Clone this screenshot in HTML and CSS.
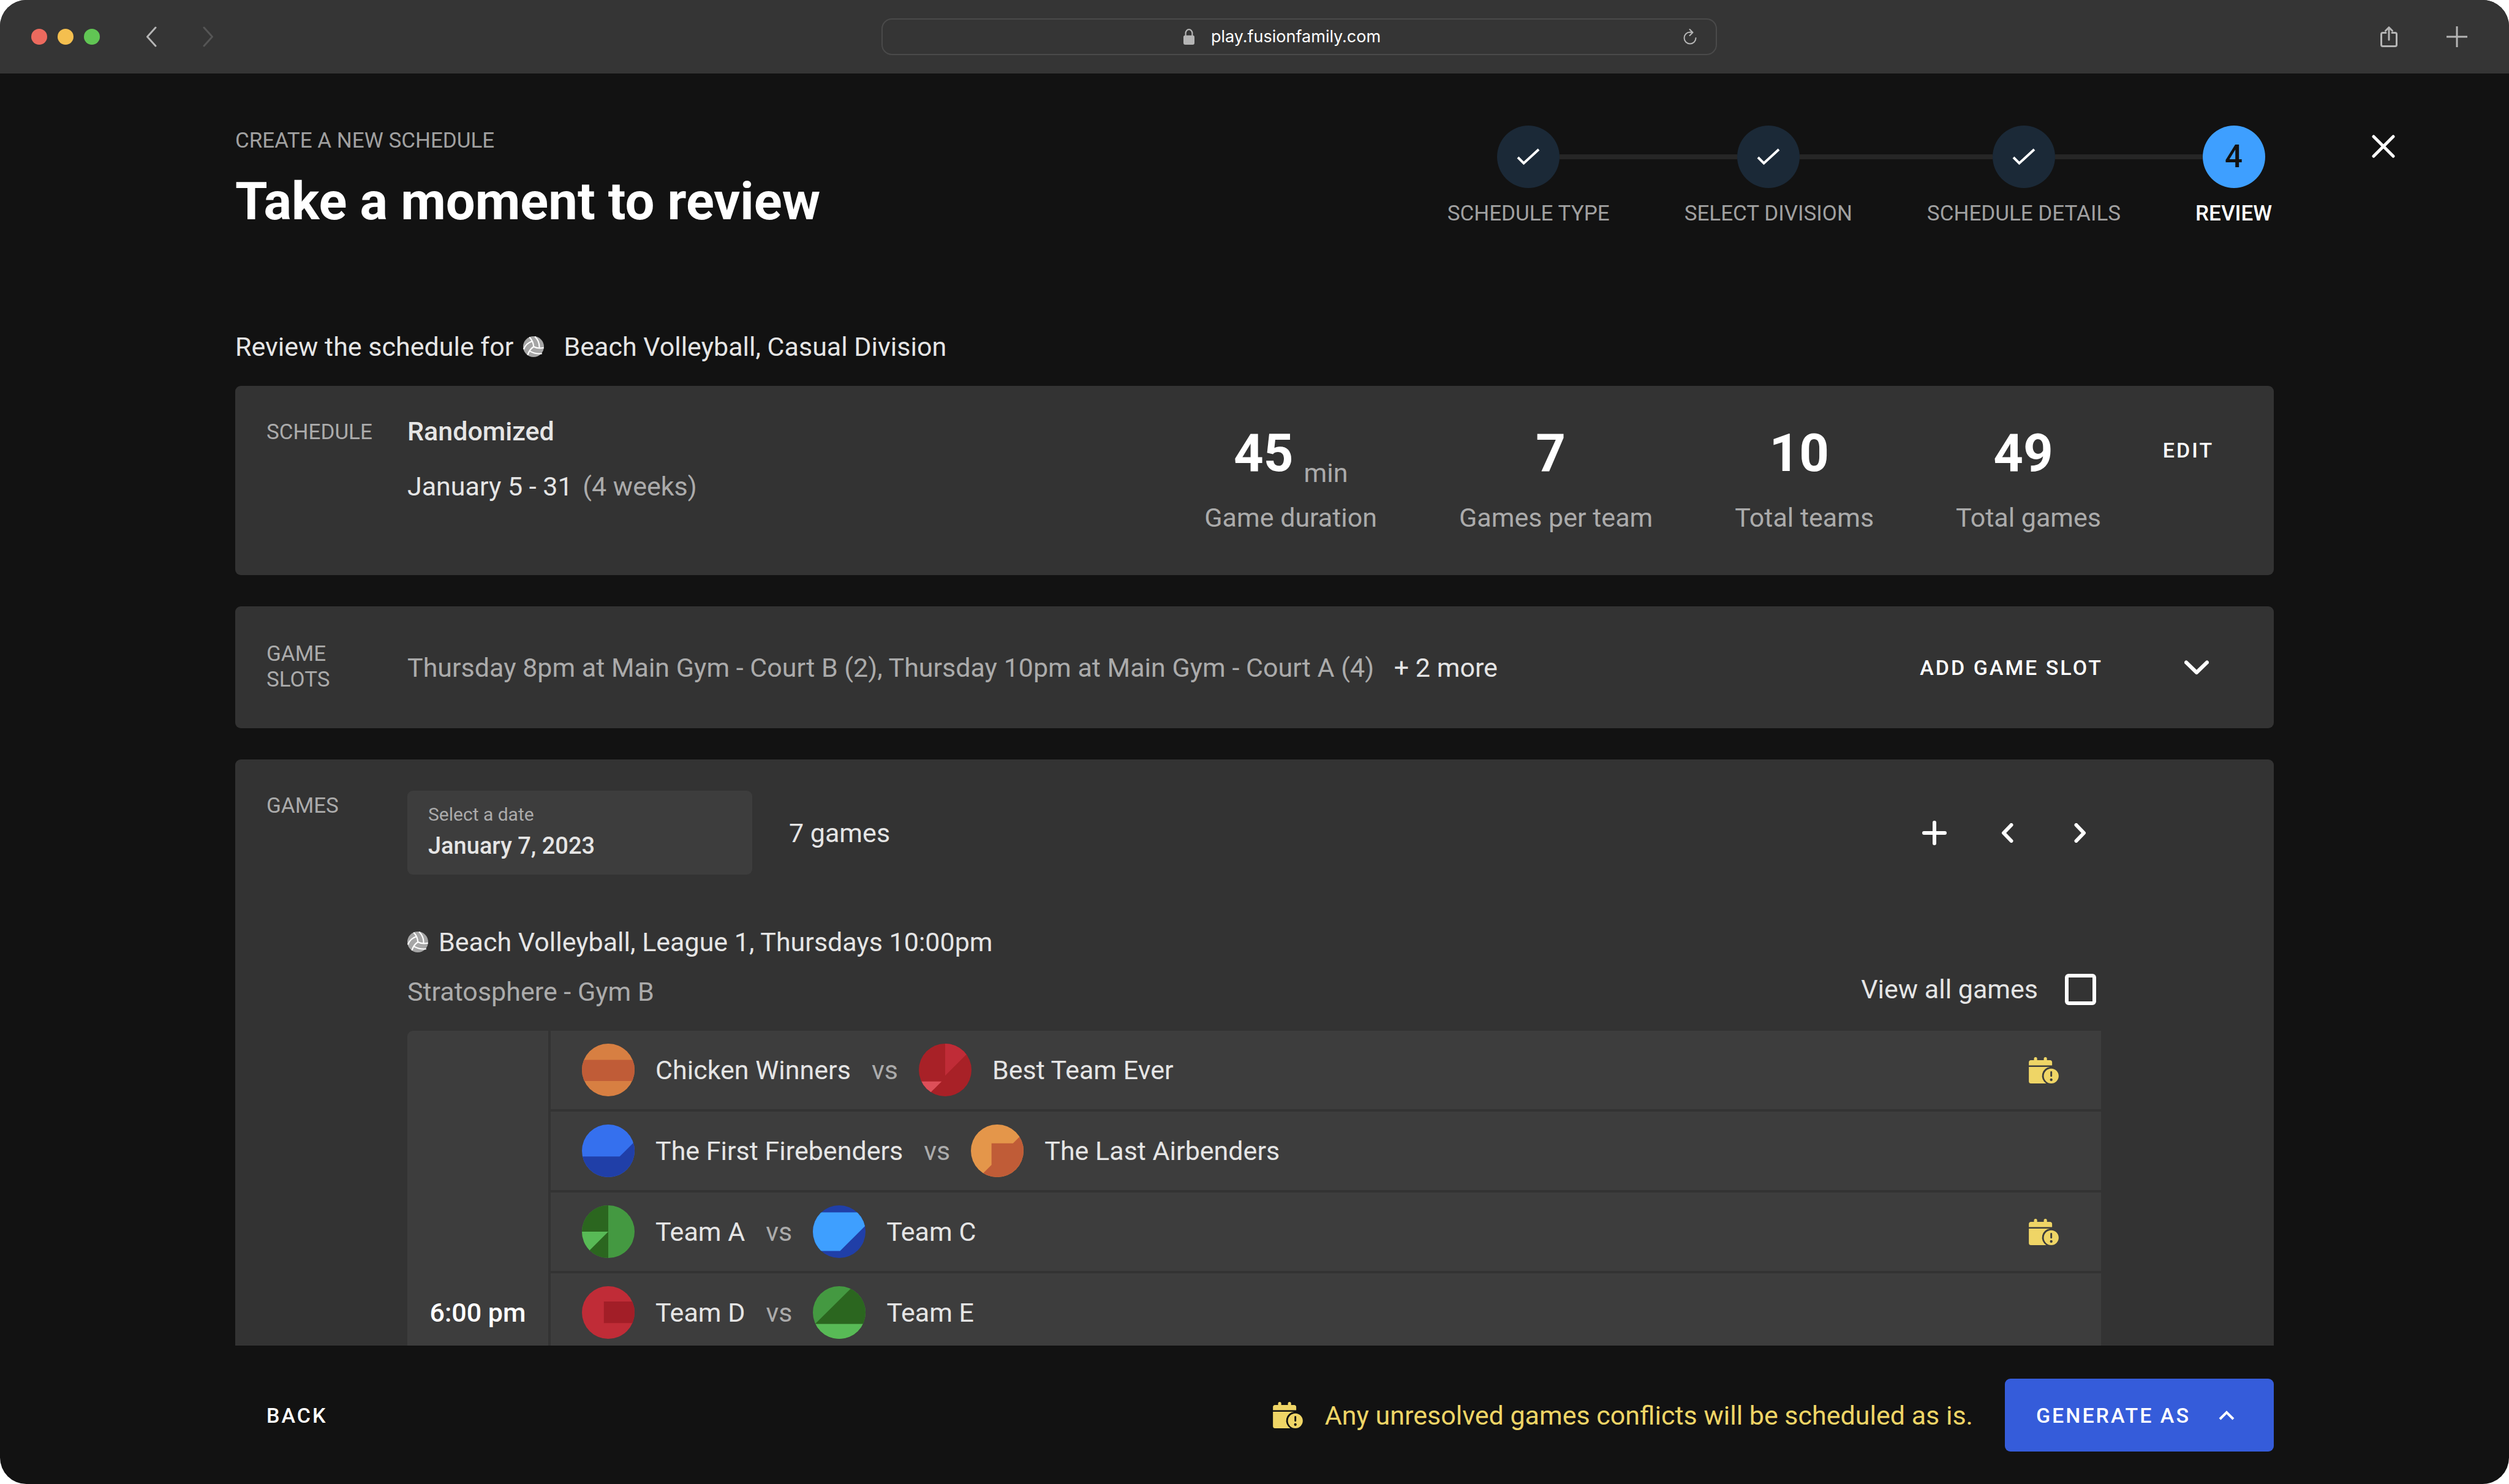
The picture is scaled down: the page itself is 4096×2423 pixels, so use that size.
FILE: index.html
```html
<!DOCTYPE html>
<html lang="en">
<head>
<meta charset="utf-8">
<meta name="viewport" content="width=device-width, initial-scale=1">
<title>Create a new schedule</title>
<link rel="stylesheet" href="styles.css">
</head>
<body>
<svg class="sprite" aria-hidden="true">
  <symbol id="volleyball" viewBox="0 0 48 48">
    <circle cx="24" cy="24" r="24" fill="#a6a6a6"/>
    <g fill="none" stroke="#fff" stroke-width="3">
      <path d="M14.500 2.000Q23.500 11 24.300 24"/>
      <path d="M1.200 30Q6.500 16 20.500 11.500"/>
      <path d="M27 .6Q38 11 37.500 27"/>
      <path d="M24.300 24Q34 29.500 47.500 26.500"/>
      <path d="M24.300 24Q14 31 10.500 43.500"/>
      <path d="M15.500 34.500Q29 42 43.500 39.800"/>
    </g>
  </symbol>
  <symbol id="calendar-alert" viewBox="18 17 68 60">
    <path fill="currentColor" d="M18 35.700V29a5 5 0 0 1 5-5h6.700v-3.300a3.600 3.600 0 0 1 7.200 0V24h15.200v-3.300a3.600 3.600 0 0 1 7.200 0V24H66a5 5 0 0 1 5 5v6.700z"/>
    <path fill="currentColor" d="M18 39.300H66.500A20.500 20.500 0 0 0 57.500 77H23a5 5 0 0 1-5-5z"/>
    <path fill="currentColor" fill-rule="evenodd" d="M69 43a17 17 0 1 0 0 34a17 17 0 1 0 0-34zM67 51a2 2 0 0 1 4 0v9a2 2 0 0 1-4 0zM69 65.600a3 3 0 1 1 0 6a3 3 0 1 1 0-6z"/>
  </symbol>
  <symbol id="check" viewBox="0 0 38 28">
    <path fill="none" stroke="currentColor" stroke-width="4" d="M2 15l9.500 9.500L36 2"/>
  </symbol>
  <clipPath id="disc"><circle cx="60" cy="60" r="60"/></clipPath>
</svg>

<div class="window">
  <header class="chrome">
    <div class="chrome-left">
      <div class="lights"><i class="light red"></i><i class="light amber"></i><i class="light green"></i></div>
      <button class="chrome-btn back" aria-label="Back"><svg width="18" height="34" viewBox="0 0 18 34"><path d="M16 2L2.500 17L16 32"/></svg></button>
      <button class="chrome-btn forward" aria-label="Forward" disabled><svg width="18" height="34" viewBox="0 0 18 34"><path d="M2 2L15.500 17L2 32"/></svg></button>
    </div>
    <div class="address">
      <div class="address-main">
        <svg width="18" height="26" viewBox="0 0 25 36"><rect y="15" width="25" height="21" rx="4" fill="#b5b5b5"/><path fill="none" stroke="#b5b5b5" stroke-width="3" d="M5 17V10a7.500 8.500 0 0 1 15 0v7"/></svg>
        <input class="url" type="text" aria-label="Address" value="play.fusionfamily.com">
      </div>
      <button class="chrome-btn reload" aria-label="Reload"><svg width="22" height="26" viewBox="0 0 22 26"><path d="M20.500 15A9.500 9.500 0 1 1 11 5.500L15 5.800M10.500 1L15.500 6L10.500 11"/></svg></button>
    </div>
    <div class="chrome-right">
      <button class="chrome-btn" aria-label="Share"><svg width="28" height="34" viewBox="0 0 28 34"><path d="M9 10.500H4a2.500 2.500 0 0 0-2.500 2.500V30A2.500 2.500 0 0 0 4 32.500H24a2.500 2.500 0 0 0 2.500-2.500V13A2.500 2.500 0 0 0 24 10.500H19M14 22V2M8.500 7.200L14 1.700L19.500 7.200"/></svg></button>
      <button class="chrome-btn" aria-label="New tab"><svg width="34" height="34" viewBox="0 0 34 34"><path d="M17 0V34M0 17H34"/></svg></button>
    </div>
  </header>

  <main class="page">
    <div class="intro">
      <div class="titles">
        <p class="eyebrow">CREATE A NEW SCHEDULE</p>
        <h1 class="title">Take a moment to review</h1>
      </div>
      <ol class="steps">
        <li class="step"><div class="marker"><span class="disc"><svg width="38" height="28"><use href="#check"/></svg></span></div><span class="caption">SCHEDULE TYPE</span></li>
        <li class="step"><div class="marker"><span class="disc"><svg width="38" height="28"><use href="#check"/></svg></span></div><span class="caption">SELECT DIVISION</span></li>
        <li class="step"><div class="marker"><span class="disc"><svg width="38" height="28"><use href="#check"/></svg></span></div><span class="caption">SCHEDULE DETAILS</span></li>
        <li class="step current" aria-current="step"><div class="marker"><span class="disc">4</span></div><span class="caption">REVIEW</span></li>
      </ol>
    </div>
    <button class="close" aria-label="Close"><svg width="38" height="38" viewBox="0 0 38 38"><path fill="none" stroke="#fff" stroke-width="5" stroke-linecap="round" d="M3 3L35 35M35 3L3 35"/></svg></button>

    <div class="content">
      <h2 class="subject">Review the schedule for <svg class="ball" width="34" height="34"><use href="#volleyball"/></svg> <span>Beach Volleyball, Casual Division</span></h2>

      <section class="panel">
        <h3 class="panel-label">SCHEDULE</h3>
        <div class="summary">
          <div class="plan">
            <p class="plan-kind">Randomized</p>
            <p>January 5 - 31 <span class="muted weeks">(4 weeks)</span></p>
          </div>
          <dl class="stats">
            <div class="stat"><dd>45<span class="unit">min</span></dd><dt>Game duration</dt></div>
            <div class="stat"><dd>7<span class="unit"></span></dd><dt>Games per team</dt></div>
            <div class="stat"><dd>10<span class="unit"></span></dd><dt>Total teams</dt></div>
            <div class="stat"><dd>49<span class="unit"></span></dd><dt>Total games</dt></div>
          </dl>
        </div>
        <div class="panel-side"><button class="text-btn edit">EDIT</button></div>
      </section>

      <section class="panel slots">
        <h3 class="panel-label">GAME SLOTS</h3>
        <div class="slots-row">
          <p class="muted">Thursday 8pm at Main Gym - Court B (2), Thursday 10pm at Main Gym - Court A (4) <span class="more">+ 2 more</span></p>
          <button class="text-btn">ADD GAME SLOT</button>
        </div>
        <div class="panel-side"><button class="icon-btn expand" aria-label="Expand game slots"><svg width="40" height="24" viewBox="0 0 40 24"><path stroke-width="6" d="M3 3.500L20 20L37 3.500"/></svg></button></div>
      </section>

      <section class="panel games">
        <h3 class="panel-label">GAMES</h3>
        <div class="games-body">
          <div class="toolbar">
            <div class="date">
              <label class="date-label" for="date">Select a date</label>
              <input class="date-value" id="date" type="text" value="January 7, 2023">
            </div>
            <p class="count">7 games</p>
            <div class="tools">
              <button class="icon-btn" aria-label="Add game"><svg width="40" height="40" viewBox="0 0 40 40"><path stroke-width="6" d="M20 3V37M3 20H37"/></svg></button>
              <button class="icon-btn" aria-label="Previous date"><svg width="20" height="32" viewBox="0 0 20 32"><path stroke-width="6" d="M16.500 3L4 16L16.500 29"/></svg></button>
              <button class="icon-btn" aria-label="Next date"><svg width="20" height="32" viewBox="0 0 20 32"><path stroke-width="6" d="M3.500 3L16 16L3.500 29"/></svg></button>
            </div>
          </div>
          <div class="league">
            <div class="league-info">
              <p class="league-name"><svg width="34" height="34"><use href="#volleyball"/></svg>Beach Volleyball, League 1, Thursdays 10:00pm</p>
              <p class="muted">Stratosphere - Gym B</p>
            </div>
            <label class="view-all">View all games <input class="tick" type="checkbox"></label>
          </div>
          <table class="matches">
            <tr>
              <th class="time" rowspan="4" scope="rowgroup">6:00 pm</th>
              <td class="match"><div class="teams">
                <svg class="avatar" viewBox="0 0 120 120"><g clip-path="url(#disc)"><path fill="#d77f42" d="M0 0h120v120H0z"/><path fill="#c05c37" d="M0 37h120v48H0z"/></g></svg>
                <span>Chicken Winners</span><span class="vs">vs</span>
                <svg class="avatar" viewBox="0 0 120 120"><g clip-path="url(#disc)"><path fill="#a82127" d="M0 0h120v120H0z"/><path fill="#c02c37" d="M60 0H120V13L60 73z"/><path fill="#dd4f59" d="M0 86H52L18 120H0z"/></g></svg>
                <span>Best Team Ever</span>
              </div></td>
              <td class="status"><svg width="49" height="43" role="img" aria-label="Conflict"><use href="#calendar-alert"/></svg></td>
            </tr>
            <tr>
              <td class="match"><div class="teams">
                <svg class="avatar" viewBox="0 0 120 120"><g clip-path="url(#disc)"><path fill="#3570ee" d="M0 0h120v120H0z"/><path fill="#203fa8" d="M0 73H86L120 39V120H0z"/></g></svg>
                <span>The First Firebenders</span><span class="vs">vs</span>
                <svg class="avatar" viewBox="0 0 120 120"><g clip-path="url(#disc)"><path fill="#e4964a" d="M0 0h120v120H0z"/><path fill="#c05c37" d="M47 43H96L120 19V120H19L47 92z"/></g></svg>
                <span>The Last Airbenders</span>
              </div></td>
              <td class="status"></td>
            </tr>
            <tr>
              <td class="match"><div class="teams">
                <svg class="avatar" viewBox="0 0 120 120"><g clip-path="url(#disc)"><path fill="#449941" d="M0 0h120v120H0z"/><path fill="#2b661f" d="M0 0H60V120H0z"/><path fill="#58ba56" d="M0 60H60L0 120z"/></g></svg>
                <span>Team A</span><span class="vs">vs</span>
                <svg class="avatar" viewBox="0 0 120 120"><g clip-path="url(#disc)"><path fill="#203fa8" d="M0 0h120v120H0z"/><path fill="#3e9fff" d="M0 16H120V46L62 104H0z"/></g></svg>
                <span>Team C</span>
              </div></td>
              <td class="status"><svg width="49" height="43" role="img" aria-label="Conflict"><use href="#calendar-alert"/></svg></td>
            </tr>
            <tr>
              <td class="match"><div class="teams">
                <svg class="avatar" viewBox="0 0 120 120"><g clip-path="url(#disc)"><path fill="#c02c37" d="M0 0h120v120H0z"/><path fill="#a21e27" d="M50 35H120V84H50z"/></g></svg>
                <span>Team D</span><span class="vs">vs</span>
                <svg class="avatar" viewBox="0 0 120 120"><g clip-path="url(#disc)"><path fill="#449941" d="M0 0h120v120H0z"/><path fill="#2b661f" d="M92 0H120V86H5z"/><path fill="#58ba56" d="M0 86H120V120H0z"/></g></svg>
                <span>Team E</span>
              </div></td>
              <td class="status"></td>
            </tr>
          </table>
        </div>
      </section>
    </div>
  </main>

  <footer class="actions">
    <button class="text-btn">BACK</button>
    <p class="notice"><svg width="49" height="43"><use href="#calendar-alert"/></svg>Any unresolved games conflicts will be scheduled as is.</p>
    <button class="primary">GENERATE AS <svg width="26" height="16" viewBox="0 0 26 16"><path fill="none" stroke="#fff" stroke-width="4" d="M2 14L13 3L24 14"/></svg></button>
  </footer>
</div>
</body>
</html>
```

FILE: styles.css
```css
* { box-sizing: border-box; margin: 0; padding: 0; }

body {
  background: #fff;
  color: #e5e5e5;
  font: 400 43px/52px Roboto, "Liberation Sans", sans-serif;
}

button, input { background: none; border: 0; color: inherit; font: inherit; }
svg { display: block; flex: none; }
ol { list-style: none; }
.sprite { position: absolute; width: 0; height: 0; }
.muted { color: #ababab; }

.window {
  display: flex;
  flex-direction: column;
  height: 100vh;
  overflow: hidden;
  border-radius: 43px;
  background: #121212;
}

/* Browser bar */
.chrome {
  flex: none;
  display: grid;
  grid-template-columns: 1439fr 1364fr 1293fr;
  align-items: center;
  height: 120px;
  background: #353535;
}
.chrome-left { display: flex; align-items: center; padding-left: 51px; }
.lights { display: flex; gap: 17px; }
.light { width: 26px; height: 26px; border-radius: 50%; }
.red { background: #ec6a5e; }
.amber { background: #f4bf4f; }
.green { background: #61c554; }
.chrome-btn { color: #b5b5b5; }
.chrome-btn path { fill: none; stroke: currentColor; stroke-width: 3; stroke-linecap: round; stroke-linejoin: round; }
.back { margin-left: 75px; }
.forward { margin-left: 75px; color: #555; }
.reload path { stroke-width: 2; }
.address {
  display: flex;
  align-items: center;
  height: 60px;
  padding-right: 31px;
  border: 2px solid #4a4a4a;
  border-radius: 17px;
}
.address-main { flex: 1; display: flex; align-items: center; justify-content: center; gap: 27px; }
.url { width: 280px; color: #fff; font: 400 27px/36px Inter, "Liberation Sans", sans-serif; }
.chrome-right { display: flex; align-items: center; justify-content: flex-end; gap: 80px; padding-right: 68px; }

/* Page */
.page {
  flex: 1;
  min-height: 0;
  overflow: hidden;
  display: grid;
  grid-template-columns: 384px 1fr 384px;
  grid-template-rows: auto auto;
  align-content: start;
  padding-top: 85px;
}
.intro { grid-column: 2; display: flex; justify-content: space-between; height: 172px; }
.titles { padding-top: 5px; }
.eyebrow { color: #a0a0a0; font-size: 35px; line-height: 40px; }
.title { margin-top: 31px; color: #fff; font-size: 85px; line-height: 96px; font-weight: 700; }

.steps { display: flex; gap: 122px; padding-right: 3px; }
.step { display: flex; flex-direction: column; gap: 22px; color: #a0a0a0; }
.marker { display: flex; align-items: center; margin: 0 -61px; }
.marker::before, .marker::after { content: ""; flex: 1; height: 8px; background: #262626; }
.step:first-child .marker::before, .step:last-child .marker::after { background: none; }
.disc {
  display: flex;
  align-items: center;
  justify-content: center;
  width: 102px;
  height: 102px;
  border-radius: 50%;
  background: #1b2937;
  color: #fff;
  font-size: 51px;
}
.caption { font-size: 35px; line-height: 40px; text-align: center; }
.current .disc { background: #3e9fff; color: #121212; font-weight: 500; }
.current .caption { color: #fff; font-weight: 500; }

.close { grid-column: 3; justify-self: start; align-self: start; margin: 15px 0 0 160px; }

.content { grid-column: 2; padding-top: 163px; }
.subject { display: flex; align-items: center; margin-bottom: 38px; font-size: 43px; font-weight: 400; }
.ball { margin: 0 32px 0 16px; }

.panel {
  display: grid;
  grid-template-columns: 230px 1fr 282px;
  margin-bottom: 51px;
  padding-left: 51px;
  border-radius: 9px;
  background: #333;
}
.panel-label { padding-top: 55px; color: #ababab; font-size: 35px; line-height: 42px; font-weight: 400; }
.panel-side { display: flex; justify-content: center; align-items: start; }
/* The negative margin takes back the tracking after the last letter. */
.text-btn { margin-right: -3px; color: #fff; font-size: 34px; line-height: 40px; font-weight: 500; letter-spacing: 3px; }
.icon-btn { display: flex; align-items: center; justify-content: center; width: 68px; height: 68px; }
.icon-btn path { fill: none; stroke: #fff; stroke-linecap: round; stroke-linejoin: round; }

.summary { display: flex; justify-content: space-between; padding: 48px 0 68px; }
.plan { display: flex; flex-direction: column; gap: 38px; }
.plan-kind { font-weight: 500; }
.weeks { margin-left: 6px; }
.stats { display: flex; gap: 134px; padding-top: 4px; }
.stat { display: flex; flex-direction: column; gap: 21px; }
.stat dd { display: flex; justify-content: center; align-items: flex-end; gap: 17px; color: #fff; font-size: 85px; line-height: 116px; font-weight: 700; }
.stat dt { color: #ababab; }
.unit { color: #ababab; font-size: 43px; line-height: 52px; font-weight: 400; }
.edit { margin-top: 85px; }

.slots { align-items: center; }
.slots .panel-label { width: 130px; padding: 57px 0 58px; }
.slots-row { display: flex; align-items: center; justify-content: space-between; }
.more { margin-left: 22px; color: #e5e5e5; }
.expand { margin-left: 30px; }

.games { margin-bottom: 0; }
.games-body { padding-top: 51px; }
.toolbar { display: flex; align-items: center; }
.date { display: flex; flex-direction: column; gap: 10px; width: 563px; height: 137px; padding: 21px 34px 0; border-radius: 9px; background: #3d3d3d; }
.date-label { color: #ababab; font-size: 30px; line-height: 36px; }
.date-value { width: 100%; font-size: 38px; line-height: 46px; font-weight: 500; }
.count { margin-left: 60px; }
.tools { display: flex; gap: 51px; margin-left: auto; }

.league { display: flex; justify-content: space-between; align-items: flex-end; padding: 84px 0 38px; }
.league-info { display: flex; flex-direction: column; gap: 29px; }
.league-name { display: flex; align-items: center; gap: 17px; }
.view-all { display: flex; align-items: center; gap: 44px; margin: 0 8px 4px 0; }
.tick { appearance: none; width: 51px; height: 51px; border: 6px solid #fff; border-radius: 6px; }

.matches { width: 100%; border-spacing: 0; }
.time { width: 230px; padding-bottom: 42px; border-radius: 9px 0 0 0; background: #3d3d3d; color: #fff; font-weight: 500; text-align: center; vertical-align: bottom; }
.match, .status { height: 132px; border-bottom: 4px solid #333; background: #3d3d3d; vertical-align: middle; }
.match { padding-left: 51px; border-left: 4px solid #333; }
.status { width: 118px; padding-right: 69px; color: #efd566; }
.teams { display: flex; align-items: center; gap: 34px; }
.avatar { width: 86px; height: 86px; }
.vs { color: #ababab; }

/* Bottom bar */
.actions { flex: none; display: flex; align-items: center; padding: 54px 384px 53px 435px; }
.notice { display: flex; align-items: center; gap: 36px; margin: 0 52px 0 auto; color: #efd566; }
.primary {
  display: flex;
  align-items: center;
  gap: 46px;
  height: 119px;
  padding: 0 64px 0 51px;
  border-radius: 9px;
  background: #355cda;
  color: #fff;
  font-size: 34px;
  font-weight: 500;
  letter-spacing: 3px;
}
```
